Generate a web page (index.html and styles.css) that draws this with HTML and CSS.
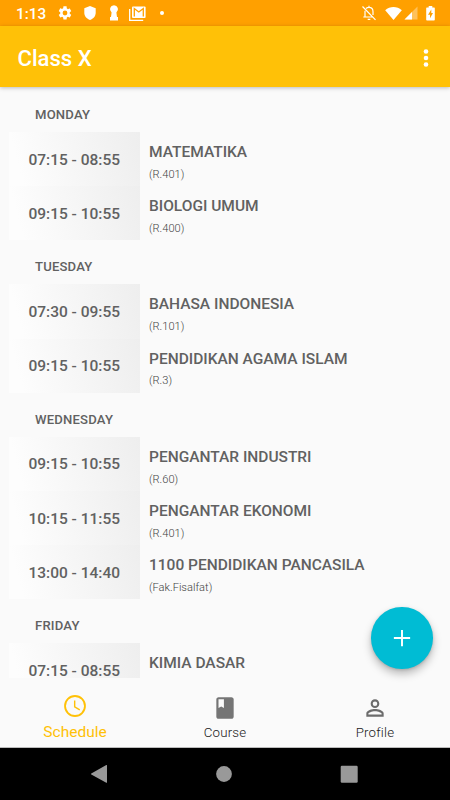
FILE: index.html
```html
<!DOCTYPE html>
<html lang="id">
<head>
<meta charset="utf-8">
<title>Class X</title>
<link rel="stylesheet" href="styles.css">
</head>
<body>
<div class="app">
  <header class="status">
    <span class="clock">1:13</span>
    <svg class="gear" width="16" height="16" viewBox="0 0 24 24"><path fill="#fff" d="M19.14 12.94c.04-.3.06-.61.06-.94s-.02-.64-.07-.94l2.03-1.58c.18-.14.23-.41.12-.61l-1.92-3.32c-.12-.22-.37-.29-.59-.22l-2.39.96c-.5-.38-1.03-.7-1.62-.94l-.36-2.54A.48.48 0 0 0 13.92 2h-3.84c-.24 0-.43.17-.47.41l-.36 2.54c-.59.24-1.13.57-1.62.94l-2.39-.96c-.22-.08-.47 0-.59.22L2.74 8.87c-.12.21-.08.47.12.61l2.03 1.58c-.05.3-.09.63-.09.94s.02.64.07.94l-2.03 1.58c-.18.14-.23.41-.12.61l1.92 3.32c.12.22.37.29.59.22l2.39-.96c.5.38 1.03.7 1.62.94l.36 2.54c.05.24.24.41.48.41h3.84c.24 0 .44-.17.47-.41l.36-2.54c.59-.24 1.13-.56 1.62-.94l2.39.96c.22.08.47 0 .59-.22l1.92-3.32c.12-.22.07-.47-.12-.61zM12 15.6A3.6 3.6 0 1 1 12 8.400a3.600 3.600 0 0 1 0 7.200z"/></svg>
    <svg class="shield" width="12" height="14" viewBox="0 0 12 14"><path fill="#fff" d="M6 0l5.700 2.200v4.500c0 3.300-2.300 6.100-5.700 7.300C2.600 12.800.3 10 .3 6.700V2.200z"/></svg>
    <svg class="keyhole" width="10" height="16" viewBox="0 0 10 16"><path fill="#fff" d="M5 .2a4 4 0 0 1 2.400 7.200L8 12h1v3.500H1V12h1l.6-4.600A4 4 0 0 1 5 .2z"/></svg>
    <svg class="mail" width="17" height="15" viewBox="0 0 17 15"><path fill="none" stroke="#fff" stroke-width="1.300" d="M.7 3v11.300h13.500"/><rect x="3" y=".4" width="13.600" height="11.600" rx="1" fill="#fff"/><path d="M5.300 10.500V2.600L9.800 6l4.500-3.400v7.900" fill="none" stroke="#ffa000" stroke-width="1.300"/></svg>
    <i class="dot"></i>
    <span class="grow"></span>
    <svg class="bell" width="16" height="16" viewBox="0 0 16 16" fill="none" stroke="#fff" stroke-width="1.200"><path d="M5 3.500C6 2.600 7 2.400 8 2.400c2.500 0 4 1.900 4 4.300V10M4 5.800v6M2.300 12h9.500M8 .8v1.600M6.700 14.300h2.600M1.500 1.500l13 13.300"/></svg>
    <svg class="wifi" width="17" height="13" viewBox="0 0 17 13"><path fill="#fff" d="M.2 3.200C5-1 12-1 16.800 3.200L8.500 13z"/></svg>
    <svg class="signal" width="14" height="14" viewBox="0 0 14 14"><path fill="#fff" fill-opacity=".35" d="M13.500.5v13H.5z"/><path fill="#fff" d="M8 6v7.500H.5z"/></svg>
    <svg class="battery" width="9" height="15" viewBox="0 0 9 15"><path fill="#fff" d="M2.700 0h3.600v1.600h1.900q.6 0 .6.600v11.500q0 .8-.8.800H1q-.8 0-.8-.8V2.200q0-.6.6-.6h1.900z"/><path fill="#ffa000" d="M5.300 3.600L2 8.700h2v3.600l3-5.200H5.300z"/></svg>
  </header>
  <div class="toolbar">
    <h1>Class X</h1>
    <svg width="6" height="20" viewBox="0 0 6 20" fill="#fff"><circle cx="3" cy="3.500" r="2.300"/><circle cx="3" cy="10" r="2.300"/><circle cx="3" cy="16.500" r="2.300"/></svg>
  </div>
  <main class="list">
    <section>
      <h2>MONDAY</h2>
      <div class="row"><div class="time">07:15 - 08:55</div><div class="info"><b>MATEMATIKA</b><small>(R.401)</small></div></div>
      <div class="row"><div class="time">09:15 - 10:55</div><div class="info"><b>BIOLOGI UMUM</b><small>(R.400)</small></div></div>
    </section>
    <section>
      <h2>TUESDAY</h2>
      <div class="row"><div class="time">07:30 - 09:55</div><div class="info"><b>BAHASA INDONESIA</b><small>(R.101)</small></div></div>
      <div class="row"><div class="time">09:15 - 10:55</div><div class="info"><b>PENDIDIKAN AGAMA ISLAM</b><small>(R.3)</small></div></div>
    </section>
    <section>
      <h2>WEDNESDAY</h2>
      <div class="row"><div class="time">09:15 - 10:55</div><div class="info"><b>PENGANTAR INDUSTRI</b><small>(R.60)</small></div></div>
      <div class="row"><div class="time">10:15 - 11:55</div><div class="info"><b>PENGANTAR EKONOMI</b><small>(R.401)</small></div></div>
      <div class="row"><div class="time">13:00 - 14:40</div><div class="info"><b>1100 PENDIDIKAN PANCASILA</b><small>(Fak.Fisalfat)</small></div></div>
    </section>
    <section>
      <h2>FRIDAY</h2>
      <div class="row"><div class="time">07:15 - 08:55</div><div class="info"><b>KIMIA DASAR</b></div></div>
    </section>
  </main>
  <nav class="tabs">
    <div class="tab active">
      <svg width="26" height="26" viewBox="0 0 24 24" fill="none" stroke="currentColor"><circle cx="12" cy="12" r="9.200" stroke-width="1.700"/><path stroke-width="1.300" d="M11.700 7v5.700l4.700 2.800"/></svg>
      <span>Schedule</span>
    </div>
    <div class="tab">
      <svg width="26" height="26" viewBox="0 0 24 24"><path fill="#757575" d="M18 2H6c-1.100 0-2 .9-2 2v16c0 1.100.9 2 2 2h12c1.100 0 2-.9 2-2V4c0-1.100-.9-2-2-2zM6 4h5v8l-2.500-1.500L6 12V4z"/></svg>
      <span>Course</span>
    </div>
    <div class="tab">
      <svg width="26" height="26" viewBox="0 0 24 24"><path fill="#6c6c6c" d="M12 5.900a2.100 2.100 0 1 1 0 4.200 2.100 2.100 0 0 1 0-4.200m0 9c2.970 0 6.100 1.460 6.100 2.100v1.100H5.900V17c0-.64 3.130-2.100 6.100-2.100M12 4C9.790 4 8 5.790 8 8s1.790 4 4 4 4-1.790 4-4-1.790-4-4-4zm0 9c-2.670 0-8 1.340-8 4v3h16v-3c0-2.660-5.330-4-8-4z"/></svg>
      <span>Profile</span>
    </div>
  </nav>
  <footer class="system">
    <svg width="18" height="20" viewBox="0 0 18 20"><path fill="#999" d="M17 1.500v16.800q0 .8-.7.400L1.300 10.400q-.8-.5 0-1L16.300 1q.7-.3.700.5z"/></svg>
    <svg width="18" height="18" viewBox="0 0 18 18"><circle cx="9" cy="9" r="7.900" fill="#999"/></svg>
    <svg width="18" height="18" viewBox="0 0 18 18"><rect x=".7" y=".7" width="17" height="17" rx="1.200" fill="#999"/></svg>
  </footer>
  <div class="fab"><svg width="26" height="26" viewBox="0 0 24 24"><path fill="#fff" d="M19.500 12.900h-6.600v6.600h-1.800v-6.600H4.500v-1.800h6.600V4.500h1.800v6.600h6.600z"/></svg></div>
</div>
</body>
</html>
```
FILE: styles.css
```css
* { box-sizing: border-box; }
body { margin: 0; font-family: Roboto, sans-serif; color: #616161; background: #fafafa; }
svg { display: block; flex: none; }
h1, h2 { margin: 0; font-weight: 500; }
.app { position: relative; width: 450px; height: 800px; display: flex; flex-direction: column; overflow: hidden; }
.status { height: 26px; flex: none; background: #ffa000; color: #fff; display: flex; align-items: center; padding: 0 15px 0 16px; }
.clock { font-size: 15.300px; font-weight: 500; width: 30px; line-height: 18px; padding-top: 2px; white-space: nowrap; }
.gear { margin-left: 11px; }
.shield { margin-left: 11px; }
.keyhole { margin-left: 13px; }
.mail { margin-left: 10px; }
.dot { width: 4px; height: 4px; border-radius: 50%; background: #fff; margin-left: 14px; }
.grow { flex: 1; }
.wifi { margin-left: 8px; }
.signal { margin-left: 2px; }
.battery { margin-left: 8px; }
.toolbar { height: 61px; flex: none; background: #ffc107; color: #fff; display: flex; align-items: center; justify-content: space-between; padding: 2px 21px 0 17.500px; box-shadow: 0 1px 4px rgba(0,0,0,.25); z-index: 1; }
.toolbar h1 { font-size: 22.100px; line-height: 26px; }
.list { height: 590.500px; flex: none; overflow: hidden; padding-top: .8px; }
.list h2 { height: 44.150px; padding: 18.100px 0 0 35px; font-size: 13.100px; letter-spacing: .18px; line-height: 18px; }
.row { display: flex; height: 54.150px; padding-left: 8.500px; }
.time { width: 131.500px; display: flex; align-items: center; justify-content: center; padding-top: 1.200px; font-size: 15.500px; font-weight: 500; background: linear-gradient(75deg, #fdfdfd 10%, #eee 100%); }
.info { display: flex; flex-direction: column; padding: 10.100px 0 0 9px; white-space: nowrap; }
.info b { font-size: 15.500px; font-weight: 500; line-height: 20px; }
.info small { font-size: 11.100px; line-height: 14px; margin-top: 5.900px; font-weight: 300; color: #424242; }
.tabs { flex: 1; display: flex; border-bottom: 1px solid #bbb; }
.tab { flex: 1; display: flex; flex-direction: column; align-items: center; padding-top: 17px; font-size: 13.300px; letter-spacing: .2px; font-weight: 300; color: #212121; }
.tab span { line-height: 18px; margin-top: 3.100px; }
.tab.active { color: #ffc107; padding-top: 15px; font-weight: 400; letter-spacing: 0; }
.tab.active span { font-size: 15.500px; margin-top: 4.600px; }
.system { height: 52px; flex: none; background: #000; display: flex; align-items: center; justify-content: space-between; padding: 0 92px 0 90px; }
.fab { position: absolute; left: 371px; top: 607px; width: 61.500px; height: 61.500px; border-radius: 50%; background: #00bcd4; display: flex; align-items: center; justify-content: center; box-shadow: 0 5px 9px rgba(0,0,0,.25), 0 1px 3px rgba(0,0,0,.15); }
```
